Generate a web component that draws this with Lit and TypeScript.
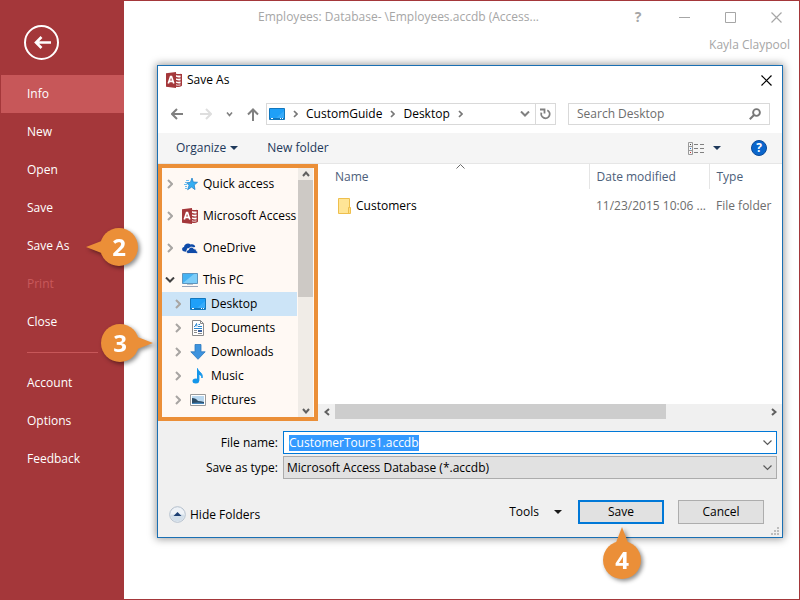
import { LitElement, html, css, svg, nothing, type TemplateResult } from "lit";
import { customElement, property, query } from "lit/decorators.js";
import { classMap } from "lit/directives/class-map.js";

const icon = (w: number, h: number, body: TemplateResult) =>
  html`<svg width=${w} height=${h} viewBox="0 0 ${w} ${h}" fill="none" aria-hidden="true">${body}</svg>`;

const icons = {
  access: () =>
    icon(16, 16, svg`
      <path d="M9 2h5.500q1.500 0 1.500 1.500v9q0 1.500-1.500 1.500H9z" fill="#fff"/>
      <path d="M10 2.300q3 1 5.300 0M10 5.500q3 1.200 5.300 0M10 8.500q3 1.200 5.300 0M10 11.500q3 1.200 5.300 0M10 14q3 .8 5.300-.5M15.300 2v11.800" stroke="#a4373a" stroke-width="1.400"/>
      <path d="M0 1.300 10 0v16L0 14.700z" fill="#a4373a"/>
      <path d="M2.300 11.500 4.600 4.500h.9l2.300 7M3.300 9.300h3.600" stroke="#fff" stroke-width="1.700"/>`),
  desktop: () =>
    icon(16, 12, svg`
      <path d="M.5.500h15v11H.5z" fill="#1fa0f8" stroke="#1277bd"/>
      <path d="M7 10 15 3v7z" fill="#37abfa"/>
      <path d="M1 10.500h14" stroke="#1277bd"/>
      <path d="M2 10.500h2M11 10.500h1M13 10.500h1" stroke="#fff"/>`),
  star: () =>
    icon(16, 16, svg`
      <path d="m10 2 1.200 4 4.300.3-3.300 2.700.8 4.600-3.400-2.500-4 2.600 1.500-4.400-2.600-2.500 3.900-.4z" fill="#35aef2" stroke="#2283cc" stroke-width=".8"/>
      <path d="M4 4.500h3M3 6.500h2M2 8.500h3M3 10.500h2M3 12.500h2" stroke="#6bbcf0"/>`),
  cloud: () =>
    icon(16, 16, svg`
      <path d="M1.600 11.200C-.6 10.400-.2 7.300 2 7.100 2.200 4 6.300 2.300 8.600 4.600 10.600 3.700 13 4.800 13.200 7L5 8.500 4.500 12z" fill="#0f4ba8"/>
      <path d="M6.200 13.500C3.500 13.200 3.900 9.800 6.400 9.900 6.700 6.800 11 6.200 12.100 8.900c1.800-.3 2.500 1 2.200 2 2 .2 1.900 2.600 0 2.600z" fill="#0f4ba8" stroke="#fff8f3" stroke-width=".9"/>`),
  pc: () =>
    icon(16, 16, svg`
      <path d="M.5 1.500h15v10H.5z" fill="#45b2f2" stroke="#5f95bd"/>
      <path d="M1 11 12 2h3v9z" fill="#7dcdf8"/>
      <path d="M5 12h6v1H5z" fill="#b9c3ce"/>
      <path d="M0 14.500h16" stroke="#98a3b8"/>`),
  document: () =>
    icon(12, 16, svg`
      <path d="M.5.500h8l3 3v12H.500z" fill="#fff" stroke="#8b8b8b"/>
      <path d="M8.500.500v3h3" stroke="#8b8b8b"/>
      <path d="M2 6.500h1l1.500-3 .5 3M6.500 4.500H8M6 6.500h4M2 8.500h8" stroke="#2a86cf"/>
      <path d="M2 10.500h3M2 12.500h3M6 13.500h4" stroke="#8b8b8b"/>
      <path d="M6 10h4v2H6z" fill="#3b5f9d"/>`),
  download: () =>
    icon(16, 16, svg`<path d="M5 .5h6v7.300h4.200L8 15.300.8 7.800H5z" fill="#3d93de" stroke="#2b78be" stroke-width=".8"/>`),
  music: () =>
    icon(12, 16, svg`
      <path d="M5.500.500c.4 3 6 4.500 4.500 9.500-.2-2.300-1.500-3.400-3.100-3.700v6.500H5.500z" fill="#1496ea" stroke="#1496ea"/>
      <ellipse cx="3.800" cy="13" rx="3.300" ry="2.500" fill="#1496ea"/>`),
  picture: () =>
    icon(16, 12, svg`
      <path d="M.5.500h15v11H.5z" fill="#fff" stroke="#9a9a9a"/>
      <path d="M2 2h12v8H2z" fill="#b9d8f0"/>
      <path d="M2 4q4 0 6 3 3 0 6 1v1H2z" fill="#2d4d66"/>
      <path d="M2 9q6-1 12 0v1H2z" fill="#4686ba"/>`),
  chevron: () => icon(6, 10, svg`<path d="m1 1 4 4-4 4" stroke="#a8a5a2" stroke-width="2"/>`),
  open: () => icon(10, 6, svg`<path d="m1 .5 4 4 4-4" stroke="#404040" stroke-width="2"/>`),
  crumb: () => icon(5, 8, svg`<path d="m1 1 3 3-3 3" stroke="#777" stroke-width="1.700"/>`),
  down: () => icon(10, 6, svg`<path d="m1 .5 4 4 4-4" stroke="#808080" stroke-width="2"/>`),
  thinDown: () => icon(9, 6, svg`<path d="m.5.500 4 4 4-4" stroke="#5a5a5a" stroke-width="1.200"/>`),
  thinUp: () => icon(9, 5, svg`<path d="m.5 4.500 4-4 4 4" stroke="#6a6a6a"/>`),
  scrollUp: () => icon(8, 6, svg`<path d="m1 5 3-3.500L7 5" stroke="#606060" stroke-width="2"/>`),
  scrollDown: () => icon(8, 6, svg`<path d="M1 1l3 3.500L7 1" stroke="#606060" stroke-width="2"/>`),
  scrollLeft: () => icon(6, 8, svg`<path d="M5 1 1.500 4 5 7" stroke="#606060" stroke-width="2"/>`),
  scrollRight: () => icon(6, 8, svg`<path d="m1 1 3.500 3L1 7" stroke="#606060" stroke-width="2"/>`),
  caret: (fill: string) => icon(8, 4, svg`<path d="M0 0h8L4 4z" fill=${fill}/>`),
  left: () => icon(12, 12, svg`<path d="M12 6H1.500M6 1 1 6l5 5" stroke="#808080" stroke-width="2"/>`),
  right: () => icon(12, 12, svg`<path d="M0 6h10.500M6 1l5 5-5 5" stroke="#dedede" stroke-width="2"/>`),
  history: () => icon(7, 5, svg`<path d="m1 .5 2.500 3 2.500-3" stroke="#808080" stroke-width="1.600"/>`),
  up: () => icon(12, 13, svg`<path d="M6 13V2M1 6.500l5-5 5 5" stroke="#808080" stroke-width="2"/>`),
  refresh: () =>
    icon(11, 12, svg`
      <path d="M7.300 2.300A4.200 4.200 0 1 1 1.500 4.600" stroke="#808080" stroke-width="1.800"/>
      <path d="M0 1.500h4.500v4" stroke="#808080" stroke-width="1.800"/>`),
  search: () =>
    icon(12, 12, svg`<circle cx="7.500" cy="4.500" r="3.400" stroke="#777" stroke-width="1.900"/><path d="M5 7 .8 11.200" stroke="#777" stroke-width="2"/>`),
  close: (color: string) => icon(11, 11, svg`<path d="m.5.500 10 10M10.500.500l-10 10" stroke=${color} stroke-width="1.200"/>`),
  view: () =>
    icon(16, 13, svg`
      <path d="M.5.500h4v12h-4zM.5 4.500h4M.5 8.500h4" stroke="#9a9a9a"/>
      <path d="M2 2.500h1" stroke="#444"/><path d="M2 6.500h1" stroke="#2a76d0"/><path d="M2 10.500h1" stroke="#c62f2f"/>
      <path d="M6 2.500h4M12 2.500h4M6 6.500h4M12 6.500h4M6 10.500h4M12 10.500h4" stroke="#808080"/>`),
  folder: () =>
    icon(13, 16, svg`
      <path d="M.5.500h11v15H.5z" fill="#ffe596" stroke="#eebf4d"/>
      <path d="M10.500 9.500h2v6h-2z" fill="#ffdf80" stroke="#eebf4d"/>`),
  collapse: () =>
    icon(17, 17, svg`
      <circle cx="8.500" cy="8.500" r="7.800" fill="#eef2f7" stroke="#b3bfcc"/>
      <path d="M1.500 8.500h14a7 7 0 0 1-14 0z" fill="#d3dfea"/>
      <path d="M4.500 10h8l-4-4z" fill="#1c3f74"/>`),
  grip: () =>
    icon(8, 8, svg`<path d="M6 0h2v2H6zM3 3h2v2H3zM6 3h2v2H6zM0 6h2v2H0zM3 6h2v2H3zM6 6h2v2H6z" fill="#bdbdbd"/>`),
  back: () =>
    icon(35, 35, svg`
      <circle cx="17.500" cy="17.500" r="16.500" stroke="#fff" stroke-width="2"/>
      <path d="M27 17.500H11.500M17.500 12 12 17.500l5.500 5.500" stroke="#fff" stroke-width="2.600"/>`),
};

const base = css`
  :host {
    font: 12px/16px "Open Sans", "Noto Sans", sans-serif;
    color: #000;
  }
  *,
  *::before,
  *::after {
    box-sizing: border-box;
  }
  svg {
    display: block;
    flex: none;
  }
  button {
    display: flex;
    align-items: center;
    justify-content: center;
    margin: 0;
    padding: 0;
    border: 0;
    background: none;
    color: inherit;
    font: inherit;
    white-space: nowrap;
  }
`;

@customElement("step-callout")
class StepCallout extends LitElement {
  @property({ type: Number }) step = 1;
  @property({ reflect: true }) point: "left" | "right" | "up" = "left";

  static styles = css`
    :host {
      display: grid;
      place-items: center;
      width: 38px;
      height: 38px;
      color: #fff;
      font: 700 24px/38px "Open Sans", "Noto Sans", sans-serif;
      filter: drop-shadow(2px 2px 2px rgb(0 0 0 / 45%));
      pointer-events: none;
    }
    svg {
      position: absolute;
      left: -14px;
      top: -14px;
      z-index: -1;
    }
    :host([point="right"]) svg {
      transform: rotate(180deg);
    }
    :host([point="up"]) svg {
      transform: rotate(90deg);
    }
  `;

  render() {
    return html`
      <svg width="66" height="66" viewBox="0 0 66 66" aria-hidden="true">
        <circle cx="33" cy="33" r="19" fill="#eb8f38" />
        <path d="M0 33 L15.500 27 L18 25 V41 L15.500 39z" fill="#eb8f38" />
      </svg>
      <span>${this.step}</span>
    `;
  }
}

@customElement("backstage-nav")
class BackstageNav extends LitElement {
  static styles = [
    base,
    css`
      :host {
        display: block;
        background: #a4373a;
        color: #fff;
      }
      .back {
        margin: 24px 0 15px 23px;
      }
      .item {
        position: relative;
        justify-content: flex-start;
        width: 100%;
        height: 38px;
        padding-left: 26px;
      }
      .active {
        background: #c75759;
      }
      .item:disabled {
        color: #c9595b;
      }
      .rule {
        height: 1px;
        margin: 11px 26px;
        border: 0;
        background: #c75759;
      }
      .callout {
        position: absolute;
        left: 99px;
        top: 1px;
      }
    `,
  ];

  private item(label: string) {
    return html`<button
      class=${classMap({ item: true, active: label === "Info" })}
      ?disabled=${label === "Print"}
    >
      ${label}${label === "Save As"
        ? html`<step-callout class="callout" step="2" point="left"></step-callout>`
        : nothing}
    </button>`;
  }

  render() {
    return html`
      <button class="back" aria-label="Back">${icons.back()}</button>
      ${["Info", "New", "Open", "Save", "Save As", "Print", "Close"].map((l) => this.item(l))}
      <hr class="rule" />
      ${["Account", "Options", "Feedback"].map((l) => this.item(l))}
    `;
  }
}

interface TreeNode {
  label: string;
  icon: () => TemplateResult;
  child?: boolean;
  open?: boolean;
  selected?: boolean;
}

const nodes: TreeNode[] = [
  { label: "Quick access", icon: icons.star },
  { label: "Microsoft Access", icon: icons.access },
  { label: "OneDrive", icon: icons.cloud },
  { label: "This PC", icon: icons.pc, open: true },
  { label: "Desktop", icon: icons.desktop, child: true, selected: true },
  { label: "Documents", icon: icons.document, child: true },
  { label: "Downloads", icon: icons.download, child: true },
  { label: "Music", icon: icons.music, child: true },
  { label: "Pictures", icon: icons.picture, child: true },
];

@customElement("folder-tree")
class FolderTree extends LitElement {
  static styles = [
    base,
    css`
      :host {
        position: relative;
        display: flex;
        border: 4px solid #eb8f38;
        background: #fff9f4;
      }
      .list {
        flex: 1;
        min-width: 0;
        margin: 0;
        padding: 4px 0 5px;
        list-style: none;
      }
      .node {
        display: flex;
        align-items: center;
        height: 24px;
        padding-left: 3px;
        white-space: nowrap;
      }
      .top {
        margin-bottom: 8px;
      }
      .open {
        margin-bottom: 0;
      }
      .child {
        padding-left: 11px;
      }
      .selected {
        background: #cce4f7;
      }
      .twisty,
      .glyph {
        display: grid;
        place-items: center;
        flex: none;
      }
      .twisty {
        width: 10px;
        margin-right: 7px;
      }
      .glyph {
        width: 16px;
        margin-right: 5px;
      }
      .bar {
        display: flex;
        flex-direction: column;
        width: 15px;
        margin: 0 1px;
        background: #f0ece7;
      }
      .step {
        width: 15px;
        height: 12px;
      }
      .track {
        flex: 1;
      }
      .thumb {
        height: 52%;
        background: #cdc9c5;
      }
      .callout {
        position: absolute;
        left: -61px;
        top: 156px;
      }
    `,
  ];

  render() {
    return html`
      <ul class="list">
        ${nodes.map(
          (n) => html`<li
            class=${classMap({ node: true, top: !n.child, open: !!n.open, child: !!n.child, selected: !!n.selected })}
          >
            <span class="twisty">${n.open ? icons.open() : icons.chevron()}</span>
            <span class="glyph">${n.icon()}</span>
            <span>${n.label}</span>
          </li>`
        )}
      </ul>
      <div class="bar">
        <button class="step" aria-label="Scroll up">${icons.scrollUp()}</button>
        <div class="track"><div class="thumb"></div></div>
        <button class="step" aria-label="Scroll down">${icons.scrollDown()}</button>
      </div>
      <step-callout class="callout" step="3" point="right"></step-callout>
    `;
  }
}

@customElement("save-dialog")
class SaveDialog extends LitElement {
  @query("#file-name") private fileName!: HTMLInputElement;

  static styles = [
    base,
    css`
      :host {
        display: block;
        border: 1px solid #1a6fb3;
        background: #f0f0f0;
        box-shadow: 0 0 8px 1px rgb(0 0 0 / 40%);
      }
      .title {
        display: flex;
        align-items: center;
        gap: 5px;
        height: 28px;
        padding: 0 10px 0 8px;
        background: #fff;
      }
      .title h1 {
        flex: 1;
        margin: 0;
        font: inherit;
      }
      .nav {
        display: flex;
        align-items: center;
        padding: 9px 12px 8px 13px;
        background: #fff;
      }
      .arrows {
        display: flex;
        align-items: center;
        gap: 17px;
        margin-right: 7px;
      }
      .arrows .history {
        margin: 0 -3px;
      }
      .address {
        display: flex;
        flex: 1;
        height: 22px;
        border: 1px solid #d9d9d9;
      }
      .crumbs {
        display: flex;
        flex: 1;
        align-items: center;
        gap: 8px;
        padding-left: 2px;
      }
      .drop {
        width: 20px;
      }
      .refresh {
        width: 20px;
        border-left: 1px solid #d9d9d9;
      }
      .search {
        display: flex;
        flex: none;
        align-items: center;
        width: 202px;
        height: 22px;
        margin-left: 12px;
        padding: 0 8px;
        border: 1px solid #d9d9d9;
      }
      input {
        flex: 1;
        min-width: 0;
        padding: 0;
        border: 0;
        outline: 0;
        background: none;
        font: inherit;
        color: inherit;
      }
      input::placeholder {
        color: #6d6d6d;
        opacity: 1;
      }
      .toolbar {
        display: flex;
        align-items: center;
        height: 31px;
        padding: 0 15px 0 18px;
        border-bottom: 1px solid #e6e6e6;
        background: #f5f5f5;
        color: #1e395b;
      }
      .organize {
        gap: 4px;
        margin-right: 29px;
      }
      .views {
        gap: 9px;
        margin: 0 30px 0 auto;
      }
      .help {
        width: 16px;
        height: 16px;
        border: 1px solid #0a4a99;
        border-radius: 50%;
        background: #0a66cc;
        color: #fff;
        font-weight: 700;
        line-height: 14px;
      }
      .panes {
        display: flex;
      }
      .tree {
        flex: none;
        width: 160px;
      }
      .files {
        display: flex;
        flex: 1;
        flex-direction: column;
        min-width: 0;
      }
      .view {
        flex: 1;
        background: #fff;
      }
      table {
        width: 100%;
        border-collapse: collapse;
        table-layout: fixed;
      }
      th,
      td {
        padding: 0 0 0 7px;
        overflow: hidden;
        font-weight: 400;
        text-align: left;
        white-space: nowrap;
      }
      th {
        position: relative;
        height: 25px;
        border-left: 1px solid #e5e5e5;
        color: #4c607a;
      }
      td {
        height: 33px;
        color: #6d6d6d;
      }
      th:first-child,
      td:first-child {
        padding-left: 17px;
        border-left: 0;
      }
      .date {
        width: 120px;
      }
      .type {
        width: 73px;
      }
      .sort {
        position: absolute;
        left: 51%;
        top: 0;
      }
      .file {
        display: flex;
        align-items: center;
        gap: 5px;
        padding-left: 3px;
        color: #000;
      }
      .hbar {
        display: flex;
        height: 15px;
        margin-bottom: 2px;
      }
      .hbar button {
        width: 17px;
      }
      .htrack {
        flex: 1;
      }
      .hthumb {
        width: 77%;
        height: 100%;
        background: #cdcdcd;
      }
      .form {
        display: grid;
        grid-template-columns: 120px 1fr;
        align-items: center;
        gap: 2px 5px;
        padding: 10px 5px 21px 0;
      }
      .form label {
        text-align: right;
      }
      .combo {
        position: relative;
        display: flex;
        align-items: center;
        height: 23px;
        border: 1px solid #0078d7;
        background: #fff;
      }
      .combo input {
        padding-left: 5px;
      }
      .combo input::selection {
        background: #3399ff;
        color: #fff;
      }
      .combo button {
        width: 17px;
      }
      .plain {
        border-color: #acacac;
        background: #e1e1e1;
      }
      .plain select {
        width: 100%;
        height: 21px;
        padding: 0 20px 0 3px;
        border: 0;
        appearance: none;
        background: none;
        color: inherit;
        font: inherit;
      }
      .plain svg {
        position: absolute;
        right: 4px;
        pointer-events: none;
      }
      .actions {
        display: flex;
        align-items: center;
        padding: 0 18px 0 11px;
      }
      .hide {
        gap: 4px;
        margin-top: 5px;
      }
      .tools {
        gap: 15px;
        margin: 0 16px 0 auto;
      }
      .push {
        position: relative;
        width: 86px;
        height: 24px;
        border: 1px solid #adadad;
        background: #e1e1e1;
      }
      .default {
        margin-right: 14px;
        border: 2px solid #0078d7;
      }
      .callout {
        position: absolute;
        left: 23px;
        top: 39px;
      }
      .grip {
        display: flex;
        justify-content: flex-end;
        padding: 3px 3px 2px;
      }
    `,
  ];

  firstUpdated() {
    this.fileName.focus();
    this.fileName.select();
  }

  render() {
    return html`
      <div class="title">
        ${icons.access()}
        <h1>Save As</h1>
        <button aria-label="Close">${icons.close("#000")}</button>
      </div>
      <div class="nav">
        <div class="arrows">
          <button aria-label="Back">${icons.left()}</button>
          <button aria-label="Forward">${icons.right()}</button>
          <button class="history" aria-label="Recent locations">${icons.history()}</button>
          <button aria-label="Up">${icons.up()}</button>
        </div>
        <div class="address">
          <div class="crumbs">
            ${icons.desktop()} ${icons.crumb()}
            <button>CustomGuide</button>
            ${icons.crumb()}
            <button>Desktop</button>
            ${icons.crumb()}
          </div>
          <button class="drop" aria-label="Previous locations">${icons.down()}</button>
          <button class="refresh" aria-label="Refresh">${icons.refresh()}</button>
        </div>
        <div class="search">
          <input type="text" placeholder="Search Desktop" aria-label="Search Desktop" />
          ${icons.search()}
        </div>
      </div>
      <div class="toolbar">
        <button class="organize">Organize ${icons.caret("#1e395b")}</button>
        <button>New folder</button>
        <button class="views" aria-label="Change view">${icons.view()} ${icons.caret("#1e395b")}</button>
        <button class="help">?</button>
      </div>
      <div class="panes">
        <folder-tree class="tree"></folder-tree>
        <div class="files">
          <div class="view">
            <table>
              <thead>
                <tr>
                  <th>Name<span class="sort">${icons.thinUp()}</span></th>
                  <th class="date">Date modified</th>
                  <th class="type">Type</th>
                </tr>
              </thead>
              <tbody>
                <tr>
                  <td><span class="file">${icons.folder()} Customers</span></td>
                  <td>11/23/2015 10:06 ...</td>
                  <td>File folder</td>
                </tr>
              </tbody>
            </table>
          </div>
          <div class="hbar">
            <button aria-label="Scroll left">${icons.scrollLeft()}</button>
            <div class="htrack"><div class="hthumb"></div></div>
            <button aria-label="Scroll right">${icons.scrollRight()}</button>
          </div>
        </div>
      </div>
      <div class="form">
        <label for="file-name">File name:</label>
        <div class="combo">
          <input id="file-name" type="text" value="CustomerTours1.accdb" spellcheck="false" />
          <button aria-label="Previous names">${icons.thinDown()}</button>
        </div>
        <label for="file-type">Save as type:</label>
        <div class="combo plain">
          <select id="file-type">
            <option>Microsoft Access Database (*.accdb)</option>
          </select>
          ${icons.thinDown()}
        </div>
      </div>
      <div class="actions">
        <button class="hide">${icons.collapse()} Hide Folders</button>
        <button class="tools">Tools ${icons.caret("#1a1a1a")}</button>
        <button class="push default">
          Save<step-callout class="callout" step="4" point="up"></step-callout>
        </button>
        <button class="push">Cancel</button>
      </div>
      <div class="grip">${icons.grip()}</div>
    `;
  }
}

@customElement("app-root")
class AppRoot extends LitElement {
  static styles = [
    base,
    css`
      :host {
        display: flex;
        box-sizing: border-box;
        min-height: 100vh;
        border: 1px solid #a4373a;
        background: #fff;
      }
      .side {
        flex: none;
        width: 123px;
      }
      .main {
        position: relative;
        z-index: 1;
        flex: 1;
        min-width: 0;
        color: #a6a6a6;
      }
      .bar {
        display: flex;
        align-items: center;
        height: 32px;
      }
      .bar h2 {
        flex: 1;
        margin: 0;
        padding-left: 134px;
        overflow: hidden;
        font: inherit;
        white-space: nowrap;
      }
      .bar button {
        width: 46px;
        height: 32px;
      }
      .bar .question {
        font-size: 14px;
        font-weight: 700;
      }
      .user {
        padding: 4px 9px 12px;
        text-align: right;
      }
      .dialog {
        margin: 0 16px 16px 33px;
      }
    `,
  ];

  render() {
    return html`
      <backstage-nav class="side"></backstage-nav>
      <main class="main">
        <header class="bar">
          <h2>Employees: Database- \\Employees.accdb (Access...</h2>
          <button class="question" aria-label="Help">?</button>
          <button aria-label="Minimize">${icon(11, 11, svg`<path d="M0 5.500h11" stroke="#a6a6a6"/>`)}</button>
          <button aria-label="Maximize">${icon(11, 11, svg`<path d="M.5.500h10v10H.5z" stroke="#a6a6a6"/>`)}</button>
          <button aria-label="Close">${icons.close("#a6a6a6")}</button>
        </header>
        <div class="user">Kayla Claypool</div>
        <save-dialog class="dialog"></save-dialog>
      </main>
    `;
  }
}
